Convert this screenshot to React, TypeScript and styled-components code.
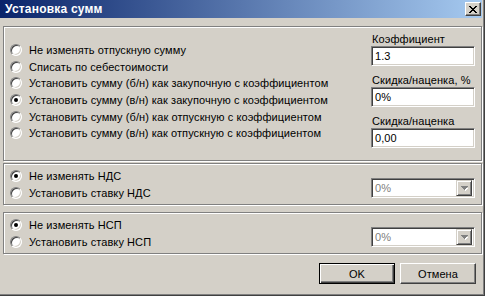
import React from "react";
import styled, { createGlobalStyle } from "styled-components";

const GlobalStyle = createGlobalStyle`
  html, body {
    margin: 0;
    padding: 0;
    background: #d4d0c8;
  }
  body {
    font-family: "Liberation Sans", Arial, sans-serif;
    font-size: 11px;
    letter-spacing: 0.08px;
    color: #000;
  }
`;

const Window = styled.div`
  width: 485px;
  height: 296px;
  box-sizing: border-box;
  background: #d4d0c8;
  border-right: 1px solid #404040;
  border-bottom: 1px solid #404040;
  box-shadow: inset -1px -1px 0 #808080;
  padding-right: 2px;
  display: flex;
  flex-direction: column;
`;

const TitleBar = styled.div`
  height: 18px;
  flex: none;
  display: flex;
  align-items: center;
  justify-content: space-between;
  padding: 0 1px 0 5px;
  background: linear-gradient(to right, #0a246a, #a6caf0);
`;

const Title = styled.span`
  color: #fff;
  font-weight: bold;
  font-size: 12px;
  letter-spacing: 0.2px;
`;

const CloseButton = styled.div`
  width: 16px;
  height: 14px;
  box-sizing: border-box;
  background: #d4d0c8;
  border: 1px solid;
  border-color: #fff #404040 #404040 #fff;
  box-shadow: inset -1px -1px 0 #808080;
  display: flex;
  align-items: center;
  justify-content: center;
`;

const Content = styled.div`
  flex: 1;
  display: flex;
  flex-direction: column;
  padding: 8px 0 0 3px;
`;

const Panel = styled.div<{ $height: number; $gap: number }>`
  height: ${(p) => p.$height}px;
  margin-top: ${(p) => p.$gap}px;
  box-sizing: border-box;
  border: 1px solid #808080;
  box-shadow: inset 1px 1px 0 #fff, 1px 1px 0 #fff;
  display: flex;
  justify-content: space-between;
`;

const RadioList = styled.div<{ $top: number }>`
  display: flex;
  flex-direction: column;
  padding: ${(p) => p.$top}px 0 0 6px;
`;

const RadioRow = styled.label`
  height: 16.6px;
  display: flex;
  align-items: center;
  white-space: nowrap;
`;

const RadioDot = styled.span<{ $checked?: boolean }>`
  width: 12px;
  height: 12px;
  box-sizing: border-box;
  margin-right: 7px;
  border-radius: 50%;
  border: 1px solid;
  border-color: #808080 #fff #fff #808080;
  box-shadow: inset 1px 1px 0 #404040, inset -1px -1px 0 #d4d0c8;
  background: #fff;
  display: flex;
  align-items: center;
  justify-content: center;
  &::after {
    content: "";
    width: 4px;
    height: 4px;
    border-radius: 50%;
    background: ${(p) => (p.$checked ? "#000" : "transparent")};
  }
`;

const FieldColumn = styled.div`
  width: 104px;
  margin-right: 6px;
  padding-top: 6px;
  display: flex;
  flex-direction: column;
  gap: 8px;
`;

const Field = styled.div`
  display: flex;
  flex-direction: column;
`;

const FieldLabel = styled.div`
  height: 13px;
  line-height: 13px;
  padding-left: 1px;
`;

const sunken = `
  box-sizing: border-box;
  height: 20px;
  border: 1px solid;
  border-color: #808080 #fff #fff #808080;
  box-shadow: inset 1px 1px 0 #404040, inset -1px -1px 0 #d4d0c8;
  background: #fff;
`;

const TextBox = styled.div`
  ${sunken}
  display: flex;
  align-items: center;
  padding-left: 3px;
`;

const ComboBox = styled.div`
  ${sunken}
  width: 104px;
  margin: 14px 6px 0 0;
  display: flex;
  align-items: center;
  justify-content: space-between;
  padding: 2px 2px 2px 3px;
  color: #808080;
`;

const ComboArrow = styled.div`
  width: 16px;
  height: 16px;
  box-sizing: border-box;
  background: #d4d0c8;
  border: 1px solid;
  border-color: #d4d0c8 #404040 #404040 #d4d0c8;
  box-shadow: inset 1px 1px 0 #fff, inset -1px -1px 0 #808080;
  display: flex;
  align-items: center;
  justify-content: center;
`;

const Footer = styled.div`
  display: flex;
  justify-content: flex-end;
  gap: 5px;
  margin-top: 9px;
  padding-right: 6px;
`;

const Button = styled.div<{ $default?: boolean }>`
  width: 76px;
  height: 21px;
  box-sizing: border-box;
  display: flex;
  align-items: center;
  justify-content: center;
  border: 1px solid;
  border-color: ${(p) => (p.$default ? "#000" : "#fff #404040 #404040 #fff")};
  box-shadow: ${(p) =>
    p.$default
      ? "inset 1px 1px 0 #fff, inset -1px -1px 0 #404040, inset -2px -2px 0 #808080"
      : "inset -1px -1px 0 #808080"};
`;

function Radio({ label, checked }: { label: string; checked?: boolean }) {
  return (
    <RadioRow>
      <RadioDot $checked={checked} />
      {label}
    </RadioRow>
  );
}

function Combo({ value }: { value: string }) {
  return (
    <ComboBox>
      <span>{value}</span>
      <ComboArrow>
        <svg width="7" height="5" viewBox="0 0 7 5">
          <path d="M1 1h5v1H5v1H4v1H3V3H2V2H1z" fill="#fff" transform="translate(1 1)" />
          <path d="M0 0h7v1H6v1H5v1H4v1H3V3H2V2H1V1H0z" fill="#808080" />
        </svg>
      </ComboArrow>
    </ComboBox>
  );
}

const sumOptions = [
  "Не изменять отпускную сумму",
  "Списать по себестоимости",
  "Установить сумму (б/н) как закупочную с коэффициентом",
  "Установить сумму (в/н) как закупочную с коэффициентом",
  "Установить сумму (б/н) как отпускную с коэффициентом",
  "Установить сумму (в/н) как отпускную с коэффициентом",
];

const fields = [
  { label: "Коэффициент", value: "1.3" },
  { label: "Скидка/наценка, %", value: "0%" },
  { label: "Скидка/наценка", value: "0,00" },
];

export default function App() {
  return (
    <>
      <GlobalStyle />
      <Window>
        <TitleBar>
          <Title>Установка сумм</Title>
          <CloseButton>
            <svg width="8" height="7" viewBox="0 0 8 7">
              <path
                d="M0 0h2v1h1v1h2V1h1V0h2v1H7v1H6v1H5v1h1v1h1v1h1v1H6V6H5V5H3v1H2v1H0V6h1V5h1V4h1V3H2V2H1V1H0z"
                fill="#000"
              />
            </svg>
          </CloseButton>
        </TitleBar>
        <Content>
          <Panel $height={135} $gap={0}>
            <RadioList $top={15}>
              {sumOptions.map((o, i) => (
                <Radio key={o} label={o} checked={i === 3} />
              ))}
            </RadioList>
            <FieldColumn>
              {fields.map((f) => (
                <Field key={f.label}>
                  <FieldLabel>{f.label}</FieldLabel>
                  <TextBox>{f.value}</TextBox>
                </Field>
              ))}
            </FieldColumn>
          </Panel>
          <Panel $height={42} $gap={2}>
            <RadioList $top={4}>
              <Radio label="Не изменять НДС" checked />
              <Radio label="Установить ставку НДС" />
            </RadioList>
            <Combo value="0%" />
          </Panel>
          <Panel $height={42} $gap={7}>
            <RadioList $top={4}>
              <Radio label="Не изменять НСП" checked />
              <Radio label="Установить ставку НСП" />
            </RadioList>
            <Combo value="0%" />
          </Panel>
          <Footer>
            <Button $default>OK</Button>
            <Button>Отмена</Button>
          </Footer>
        </Content>
      </Window>
    </>
  );
}
